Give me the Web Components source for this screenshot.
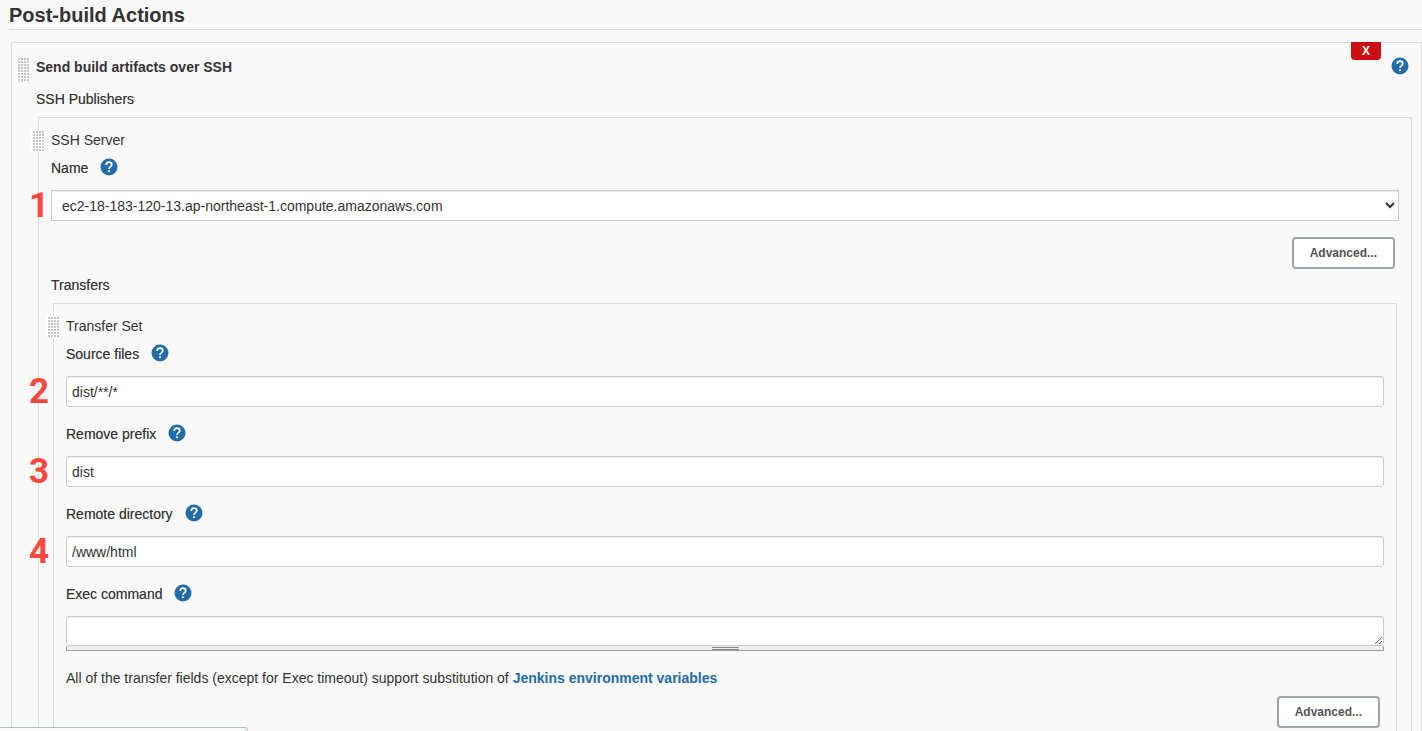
<!DOCTYPE html>
<html lang="en">
<head>
<meta charset="utf-8">
<title>Post-build Actions</title>
<style>
    html {
        height: 100%;
        overflow: hidden;
    }

    body {
        margin: 0;
        background: #f9f9f9;
        color: #333;
        font: 14px/20px "Liberation Sans", Arial, sans-serif;
    }
</style>
</head>
<body>
<config-section heading="Post-build Actions">
    <config-panel heading="Send build artifacts over SSH" level="top">
        <config-group label="SSH Publishers">
            <config-panel heading="SSH Server">
                <config-field label="Name" type="select" value="ec2-18-183-120-13.ap-northeast-1.compute.amazonaws.com" step="1"></config-field>
                <advanced-button></advanced-button>
                <config-group label="Transfers">
                    <config-panel heading="Transfer Set">
                        <config-field label="Source files" value="dist/**/*" step="2"></config-field>
                        <config-field label="Remove prefix" value="dist" step="3"></config-field>
                        <config-field label="Remote directory" value="/www/html" step="4"></config-field>
                        <config-field label="Exec command" type="textarea"></config-field>
                        <config-note>All of the transfer fields (except for Exec timeout) support substitution of <a href="#env">Jenkins environment variables</a></config-note>
                        <advanced-button></advanced-button>
                    </config-panel>
                </config-group>
            </config-panel>
        </config-group>
    </config-panel>
</config-section>
<status-bubble></status-bubble>

<script>
class BaseElement extends HTMLElement {
    constructor() {
        super()
        this.attachShadow({ mode: "open" });
    }

    connectedCallback() {
        const template = document.createElement("template");
        template.innerHTML = this.getStyles() + this.getTemplate()
        this.shadowRoot.appendChild(template.content.cloneNode(true))
    }
}

class ConfigSection extends BaseElement {
    getTemplate() {
        return /*html*/`
        <h2>${this.getAttribute('heading')}</h2>
        <slot></slot>
        `
    }

    getStyles() {
        return /*css*/`
        <style>
            :host {
                display: block;
            }

            h2 {
                margin: 0 0 12px 9px;
                padding: 3px 0 2px;
                border-bottom: 1px solid #ddd;
                font-size: 20px;
                line-height: 24px;
            }

            ::slotted(config-panel) {
                margin-left: 11px;
            }
        </style>
        `
    }
}

class HelpButton extends BaseElement {
    getTemplate() {
        return /*html*/`
        <button type="button" aria-label="Help">
            <svg viewBox="0 0 18 18" width="18" height="18" aria-hidden="true">
                <circle cx="9" cy="9" r="8.5" fill="#236ca6"/>
                <path d="M6.2 6.9c0-1.7 1.2-2.8 2.8-2.8s2.8 1 2.8 2.5c0 2.1-2.8 2.1-2.8 4.4" fill="none" stroke="#fff" stroke-width="1.7"/>
                <rect x="8.1" y="12.3" width="1.8" height="1.8" fill="#fff"/>
            </svg>
        </button>
        `
    }

    getStyles() {
        return /*css*/`
        <style>
            :host {
                display: block;
            }

            button {
                display: block;
                padding: 0;
                border: 0;
                background: none;
                cursor: pointer;
            }

            svg {
                display: block;
            }
        </style>
        `
    }
}

class ConfigPanel extends BaseElement {
    getTemplate() {
        const top = this.getAttribute('level') === 'top'
        return /*html*/`
        <span class="handle"></span>
        ${top ? '<button type="button" class="delete">X</button>' : ''}
        <header>
            <span class="heading">${this.getAttribute('heading')}</span>
            ${top ? '<help-button></help-button>' : ''}
        </header>
        <slot></slot>
        `
    }

    getStyles() {
        return /*css*/`
        <style>
            :host {
                display: block;
                position: relative;
                padding: 12px 12px 20px;
                border: 1px solid #ddd;
            }

            :host([level="top"]) {
                padding: 14px 7px 20px 24px;
            }

            header {
                display: flex;
                justify-content: space-between;
                align-items: flex-start;
            }

            :host([level="top"]) .heading {
                font-weight: bold;
            }

            help-button {
                margin-right: 5px;
            }

            /* 2px grey dots on a 3px white grid */
            .handle {
                position: absolute;
                top: 12px;
                left: -8px;
                width: 12px;
                height: 21px;
                border-left: 1px solid #fff;
                background:
                    linear-gradient(#fff 1px, transparent 1px) 0 0 / 3px 3px,
                    linear-gradient(90deg, #fff 1px, #c4c4c4 1px) 0 0 / 3px 3px;
                cursor: move;
            }

            :host([level="top"]) .handle {
                top: 14px;
                left: 4px;
                height: 24px;
            }

            .delete {
                position: absolute;
                top: -1px;
                right: 40px;
                width: 30px;
                height: 18px;
                padding: 0;
                border: 0;
                border-radius: 0 0 4px 4px;
                background: #c90f0f;
                color: #fff;
                font: bold 12px/18px "Liberation Sans", Arial, sans-serif;
            }
        </style>
        `
    }
}

class ConfigGroup extends BaseElement {
    getTemplate() {
        return /*html*/`
        <div class="label">${this.getAttribute('label')}</div>
        <slot></slot>
        `
    }

    getStyles() {
        return /*css*/`
        <style>
            :host {
                display: block;
                margin-top: 12px;
            }

            :host([label="Transfers"]) {
                margin-top: 6px;
            }

            .label {
                margin-bottom: 8px;
                text-shadow: 0 0 #3338;
            }

            ::slotted(config-panel) {
                margin: 0 2px;
            }
        </style>
        `
    }
}

class ConfigField extends BaseElement {
    getControl() {
        const value = this.getAttribute('value') || ''
        switch (this.getAttribute('type')) {
            case 'select':
                return `<select id="control"><option>${value}</option></select>`
            case 'textarea':
                return `<textarea id="control" rows="1"></textarea><div class="grip"><i></i></div>`
            default:
                return `<input id="control" type="text" value="${value}">`
        }
    }

    getTemplate() {
        const step = this.getAttribute('step')
        return /*html*/`
        <div class="label-row">
            <label for="control">${this.getAttribute('label')}</label>
            <help-button></help-button>
        </div>
        <div class="control">
            ${step ? `<span class="step">${step}</span>` : ''}
            ${this.getControl()}
        </div>
        `
    }

    getStyles() {
        return /*css*/`
        <style>
            :host {
                --step-left: -37px;
                display: block;
                margin: 8px 0 17px;
            }

            :host([type="select"]) {
                --step-left: -22px;
                margin-bottom: 16px;
            }

            .label-row {
                display: flex;
                align-items: flex-start;
                gap: 12px;
                margin-bottom: 12px;
            }

            label {
                text-shadow: 0 0 #3338;
            }

            .control {
                position: relative;
            }

            input, select, textarea {
                display: block;
                box-sizing: border-box;
                width: 100%;
                height: 31px;
                margin: 0;
                padding: 0 5px;
                border: 1px solid #ccc;
                border-radius: 3px;
                background: #fff;
                box-shadow: inset 0 1px 1px #eee;
                color: #333;
                font: inherit;
            }

            select {
                padding: 0 0 0 6px;
                border-radius: 0;
            }

            textarea {
                height: 30px;
                resize: both;
            }

            .grip {
                display: flex;
                justify-content: center;
                align-items: center;
                box-sizing: border-box;
                height: 5px;
                border: 1px solid #999fa5;
                border-top: 0;
                background: #eee;
            }

            .grip i {
                box-sizing: border-box;
                width: 27px;
                height: 3px;
                border: solid #888;
                border-width: 1px 0;
            }

            .step {
                position: absolute;
                top: 0;
                left: var(--step-left);
                width: 20px;
                color: #fb483f;
                font: bold 35px/31px Roboto, sans-serif;
                text-align: center;
            }
        </style>
        `
    }
}

class AdvancedButton extends BaseElement {
    getTemplate() {
        return /*html*/`<button type="button">Advanced...</button>`
    }

    getStyles() {
        return /*css*/`
        <style>
            :host {
                display: flex;
                justify-content: flex-end;
                padding-right: 4px;
            }

            button {
                height: 32px;
                padding: 0 16px;
                border: 2px solid #9aa5af;
                border-radius: 4px;
                background: #fff;
                color: #555;
                font: bold 12px/16px "Liberation Sans", Arial, sans-serif;
            }
        </style>
        `
    }
}

class ConfigNote extends BaseElement {
    getTemplate() {
        return /*html*/`<slot></slot>`
    }

    getStyles() {
        return /*css*/`
        <style>
            :host {
                display: block;
                margin-bottom: 8px;
            }

            ::slotted(a) {
                color: #236ca6;
                font-weight: bold;
                text-decoration: none;
            }
        </style>
        `
    }
}

// browser style link bubble peeking in at the bottom left
class StatusBubble extends BaseElement {
    getTemplate() {
        return ''
    }

    getStyles() {
        return /*css*/`
        <style>
            :host {
                position: fixed;
                bottom: 0;
                left: 0;
                box-sizing: border-box;
                width: 248px;
                height: 4px;
                border: 1px solid #a9bfc0;
                border-width: 1px 1px 0 0;
                border-radius: 0 5px 0 0;
                background: #fafafa;
            }
        </style>
        `
    }
}

customElements.define("help-button", HelpButton);
customElements.define("config-section", ConfigSection);
customElements.define("config-panel", ConfigPanel);
customElements.define("config-group", ConfigGroup);
customElements.define("config-field", ConfigField);
customElements.define("advanced-button", AdvancedButton);
customElements.define("config-note", ConfigNote);
customElements.define("status-bubble", StatusBubble);
</script>
</body>
</html>
